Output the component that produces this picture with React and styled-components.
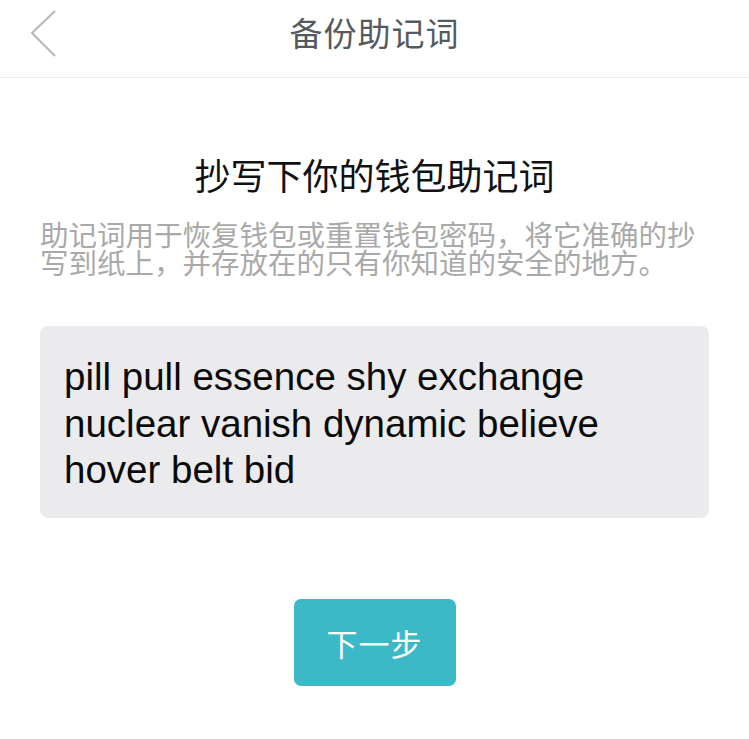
import React from 'react';
import styled, { createGlobalStyle } from 'styled-components';

const GlobalStyle = createGlobalStyle`
  body {
    margin: 0;
    background: #ffffff;
    font-family: "Liberation Sans", "Noto Sans CJK SC", sans-serif;
  }
`;

const Page = styled.div`
  width: 749px;
  min-height: 739px;
  background: #fff;
`;

const Header = styled.header`
  position: relative;
  height: 77px;
  display: flex;
  align-items: center;
  justify-content: center;
  border-bottom: 1px solid #ececec;
`;

const BackButton = styled.button`
  position: absolute;
  left: 30px;
  top: 10px;
  border: 0;
  padding: 0;
  background: none;
  width: 28px;
  height: 48px;
`;

const HeaderTitle = styled.h1`
  margin: 0;
  font-size: 33px;
  font-weight: 400;
  color: #555a5e;
  letter-spacing: 1px;
  padding-bottom: 14px;
`;

const Content = styled.main`
  padding: 78px 40px 0;
  display: flex;
  flex-direction: column;
`;

const Heading = styled.h2`
  margin: 0;
  text-align: center;
  font-size: 36px;
  font-weight: 400;
  color: #111;
  line-height: 44px;
`;

const Hint = styled.p`
  margin: 22px 0 0;
  font-size: 28.5px;
  line-height: 28px;
  color: #a9a9a9;
`;

const WordBox = styled.div`
  margin-top: 48px;
  background: #ebebed;
  border-radius: 8px;
  padding: 28px 24px 24px;
  height: 192px;
  box-sizing: border-box;
  font-size: 38.5px;
  line-height: 46.5px;
  color: #0a0a0a;
`;

const WordLine = styled.div`
  white-space: nowrap;
`;

const Next = styled.button`
  align-self: center;
  margin-top: 81px;
  width: 162px;
  height: 87px;
  border: 0;
  border-radius: 7px;
  background: #3bb9c6;
  color: #fff;
  font-family: "Noto Sans CJK SC", sans-serif;
  font-size: 31px;
  letter-spacing: 1px;
`;

const lines = [
  'pill pull essence shy exchange',
  'nuclear vanish dynamic believe',
  'hover belt bid',
];

export default function App() {
  return (
    <Page>
      <GlobalStyle />
      <Header>
        <BackButton aria-label="返回">
          <svg width="28" height="48" viewBox="0 0 28 48">
            <polyline points="25,1 2,23 25,46" fill="none" stroke="#b8b8b8" strokeWidth="2" />
          </svg>
        </BackButton>
        <HeaderTitle>备份助记词</HeaderTitle>
      </Header>
      <Content>
        <Heading>抄写下你的钱包助记词</Heading>
        <Hint>助记词用于恢复钱包或重置钱包密码，将它准确的抄写到纸上，并存放在的只有你知道的安全的地方。</Hint>
        <WordBox>
          {lines.map((line) => (
            <WordLine key={line}>{line}</WordLine>
          ))}
        </WordBox>
        <Next>下一步</Next>
      </Content>
    </Page>
  );
}
